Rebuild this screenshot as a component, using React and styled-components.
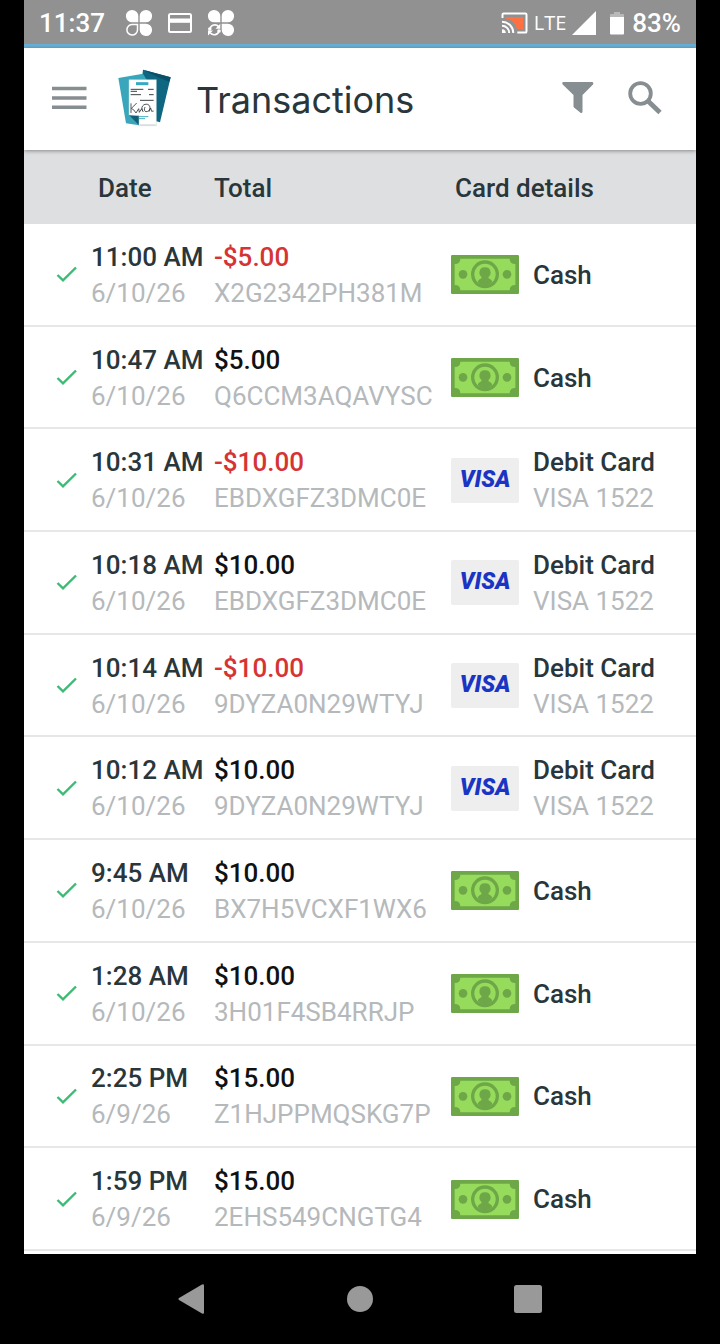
import React from 'react';
import styled, {createGlobalStyle} from 'styled-components';

const GlobalStyle = createGlobalStyle`
  * {
    box-sizing: border-box;
  }

  body {
    margin: 0;
    background: #000;
    font-family: Roboto, "Liberation Sans", sans-serif;
    font-size: 26px;
    line-height: 36px;
    color: #29363b;
  }

  button {
    display: flex;
    align-items: center;
    justify-content: center;
    padding: 0;
    border: none;
    background: none;
    cursor: pointer;
  }

  svg {
    display: block;
    flex: none;
  }
`;

const Device = styled.div`
  display: flex;
  flex-direction: column;
  min-height: 100vh;
  padding: 0 24px;
`;

const StatusBar = styled.div`
  display: flex;
  align-items: center;
  justify-content: space-between;
  height: 48px;
  padding: 0 15px;
  border-bottom: 4px solid #68b0d5;
  background: #919191;
  color: #fff;
  font-weight: 500;
`;

const StatusGroup = styled.div`
  display: flex;
  align-items: center;
  gap: ${(props) => props.$gap};
  padding-top: 2px;
`;

const Clock = styled.span`
  margin-right: 6px;
`;

const Network = styled.span`
  font-family: "Open Sans", sans-serif;
  font-size: 20px;
  font-weight: 400;
`;

const Battery = styled.span`
  display: flex;
  align-items: center;
  gap: 8px;
  margin-left: 8px;
`;

const AppBar = styled.header`
  position: relative;
  display: flex;
  align-items: center;
  height: 102px;
  padding: 0 34px 2px 28px;
  background: #fff;
  box-shadow: 0 1px 4px rgba(0, 0, 0, 0.4);
`;

const MenuButton = styled.button`
  margin-right: 30px;
`;

const Title = styled.h1`
  flex: 1;
  margin: 0 0 0 24px;
  padding-top: 4px;
  font-family: Inter, sans-serif;
  font-size: 36px;
  font-weight: 400;
  line-height: 44px;
`;

const Actions = styled.div`
  display: flex;
  align-items: center;
  gap: 34px;
`;

const List = styled.main`
  display: flex;
  flex: 1;
  flex-direction: column;
  padding-bottom: 3px;
  background: #fff;
`;

const TransactionsTable = styled.table`
  flex: 1;
  width: 100%;
  table-layout: fixed;
  border-collapse: separate;
  border-spacing: 0;
`;

const HeadCell = styled.th`
  height: 74px;
  width: ${(props) => props.$width || 'auto'};
  padding: 2px 0 0 ${(props) => props.$indent || '0'};
  background: #dedfe1;
  font-weight: 500;
  text-align: left;
`;

const Cell = styled.td`
  padding: 1px 0 0 ${(props) => props.$indent || '0'};
  border-bottom: 2px solid #e6e7e8;
  vertical-align: middle;
  white-space: nowrap;
`;

const Primary = styled.div`
  color: ${(props) => props.$color || 'inherit'};
  font-weight: 500;
`;

const Secondary = styled.div`
  color: #b5b9bb;
`;

const CardDetails = styled.div`
  display: flex;
  align-items: center;
  gap: 14px;
`;

const VisaBadge = styled.div`
  width: 68px;
  height: 45px;
  border-radius: 2px;
  background: #eeeeee;
  color: #1a35c4;
  font-size: 23px;
  font-style: italic;
  font-weight: 900;
  line-height: 44px;
  text-align: center;
`;

const NavBar = styled.nav`
  display: grid;
  grid-template-columns: repeat(3, 1fr);
  align-items: center;
  height: 90px;
  padding: 0 84px;
`;

const CloverIcon = ({syncing}) => (
    <svg width="28" height="28" viewBox="0 0 28 28" fill="#fff">
        <path d="M13.3 13.3H7.5A6.2 6.2 0 1 1 13.3 7.2z"/>
        <path d="M14.7 13.3V7.2a6.2 6.2 0 1 1 5.8 6.1z"/>
        <path d="M14.7 14.7h5.8a6.2 6.2 0 1 1-5.8 6.1z"/>
        {syncing ? (
            <g>
                <path d="M3 19.6a5 5 0 0 1 8.6-2M12 22a5 5 0 0 1-8.6 2" fill="none" stroke="#fff" strokeWidth="1.7"/>
                <path d="M13.3 14.7v5H8.4zM1 26.5v-5h5z"/>
                <circle cx="2.8" cy="20" r="1.8"/>
                <circle cx="12" cy="22" r="1.8"/>
            </g>
        ) : (
            <path d="M12.5 15.5H7.7a5.3 5.3 0 1 0 4.8 5.4z" fill="none" stroke="#fff" strokeWidth="1.5"/>
        )}
    </svg>
);

const CreditCardIcon = () => (
    <svg width="26" height="22" viewBox="0 0 26 22">
        <rect x="2" y="2" width="22" height="18" rx="1.5" fill="none" stroke="#fff" strokeWidth="2"/>
        <path d="M2 6.5h22v4.3H2z" fill="#fff"/>
    </svg>
);

const CastIcon = () => (
    <svg width="27" height="22" viewBox="0 0 27 22" fill="none" stroke="#fff" strokeWidth="2">
        <path d="M5 5h17v12h-6A12 12 0 0 0 5 7z" fill="#ff7043" stroke="none"/>
        <path d="M1.5 6V2.6q0-1.2 1.2-1.2h21.6q1.2 0 1.2 1.2v16.8q0 1.2-1.2 1.2h-8"/>
        <path d="M1 9.7a11.3 11.3 0 0 1 11.3 11.3M1 13.8A7.2 7.2 0 0 1 8.2 21"/>
        <path d="M1 17.2A3.8 3.8 0 0 1 4.8 21H1z" fill="#fff" stroke="none"/>
    </svg>
);

const SignalIcon = () => (
    <svg width="24" height="24" viewBox="0 0 24 24">
        <path d="M24 0v24H0z" fill="#fff"/>
    </svg>
);

const BatteryIcon = () => (
    <svg width="14" height="24" viewBox="0 0 14 24">
        <path d="M4 1h6v2h3q1 0 1 1v3H0V4q0-1 1-1h3z" fill="#b9b9b9"/>
        <path d="M0 6h14v16.5q0 1-1 1H1q-1 0-1-1z" fill="#fff"/>
    </svg>
);

const MenuIcon = () => (
    <svg width="35" height="24" viewBox="0 0 35 24" stroke="#868e91" strokeWidth="3.5">
        <path d="M0 2.500h34.500M0 12h34.500M0 21.300h34.500"/>
    </svg>
);

const PapersLogo = () => (
    <svg width="55" height="58" viewBox="279 60 165 174">
        <path d="M357 62 440 85 408 220 340 200z" fill="#0e6680"/>
        <path d="M357 62 440 85 436 98 400 84z" fill="#0a5068"/>
        <path d="M283 87 357 74 368 92 370 210 345 229 306 223z" fill="#3aa6bb"/>
        <path d="M315 198 345 229 348 198z" fill="#0f5f77"/>
        <path d="M315 92h82v138h-52v-30l-30-2z" fill="#fff" stroke="#c3d3d8" strokeWidth="1.5"/>
        <path d="M336 104h37" stroke="#35a9c0" strokeWidth="9"/>
        <path d="M320 121h38M320 127h19M320 137h31M372 121h17M375 137h14M348 154h41" stroke="#3d4346" strokeWidth="3"/>
        <path d="M321 163v29M338 162q-9 10-16 16 8 3 14 14l8-13 2 11 7-11q2 8 5 8" fill="none" stroke="#34393c" strokeWidth="2.500"/>
        <path d="M357 188q-8-14 3-21 14-5 18 7 0 14-12 14-8-2-3-14M375 188l5-11 3 10 6-1" fill="none" stroke="#34393c" strokeWidth="2.500"/>
        <path d="M345 203h28M345 209h18" stroke="#45adc1" strokeWidth="3"/>
        <path d="M348 228h47" stroke="#d5d8d6" strokeWidth="4"/>
    </svg>
);

const FilterIcon = () => (
    <svg width="32" height="32" viewBox="0 0 32 32">
        <path d="M1 0h29.500q1.500 1 .5 2.500L20.500 13v17q-.5 1.500-2 .7L12 25.500q-.5-.5-.5-1.500V13L.7 2.500Q-.3 1 1 0z" fill="#868e91"/>
    </svg>
);

const SearchIcon = () => (
    <svg width="34" height="34" viewBox="0 0 34 34" fill="none" stroke="#868e91">
        <circle cx="12.500" cy="12.500" r="10.300" strokeWidth="3.800"/>
        <path d="m20.500 20.500 11.500 11" strokeWidth="4.800"/>
    </svg>
);

const CheckIcon = () => (
    <svg width="21" height="17" viewBox="0 0 21 17">
        <path d="m1.500 9 5.500 5.400L20 1.500" fill="none" stroke="#3dbb74" strokeWidth="2.400"/>
    </svg>
);

const CashIcon = () => (
    <svg width="68" height="39" viewBox="0 0 204 117">
        <rect width="204" height="117" rx="4" fill="#6ea748"/>
        <path d="M28 11h148q0 16 17 16v63q-17 0-17 16H28q0-16-17-16V27q17 0 17-16z" fill="#97db5d"/>
        <g fill="#6ea748">
            <circle cx="36" cy="58" r="13"/>
            <circle cx="168" cy="58" r="13"/>
            <circle cx="102" cy="58" r="42"/>
        </g>
        <circle cx="102" cy="58" r="32" fill="#97db5d"/>
        <path d="M102 37q16 0 17 16 0 9-7 14 0 4 8 7 5 3 3 8-9 10-21 10T81 82q-2-5 3-8 8-3 8-7-7-5-7-14 1-16 17-16z" fill="#6ea748"/>
    </svg>
);

const transactions = [
    {time: '11:00 AM', date: '6/10/26', total: '-$5.00', reference: 'X2G2342PH381M'},
    {time: '10:47 AM', date: '6/10/26', total: '$5.00', reference: 'Q6CCM3AQAVYSC'},
    {time: '10:31 AM', date: '6/10/26', total: '-$10.00', reference: 'EBDXGFZ3DMC0E', card: 'VISA 1522'},
    {time: '10:18 AM', date: '6/10/26', total: '$10.00', reference: 'EBDXGFZ3DMC0E', card: 'VISA 1522'},
    {time: '10:14 AM', date: '6/10/26', total: '-$10.00', reference: '9DYZA0N29WTYJ', card: 'VISA 1522'},
    {time: '10:12 AM', date: '6/10/26', total: '$10.00', reference: '9DYZA0N29WTYJ', card: 'VISA 1522'},
    {time: '9:45 AM', date: '6/10/26', total: '$10.00', reference: 'BX7H5VCXF1WX6'},
    {time: '1:28 AM', date: '6/10/26', total: '$10.00', reference: '3H01F4SB4RRJP'},
    {time: '2:25 PM', date: '6/9/26', total: '$15.00', reference: 'Z1HJPPMQSKG7P'},
    {time: '1:59 PM', date: '6/9/26', total: '$15.00', reference: '2EHS549CNGTG4'},
];

const TransactionRow = ({transaction}) => {
    const {time, date, total, reference, card} = transaction;
    const isRefund = total.startsWith('-');

    return (
        <tr>
            <Cell $indent="32px"><CheckIcon/></Cell>
            <Cell>
                <Primary>{time}</Primary>
                <Secondary>{date}</Secondary>
            </Cell>
            <Cell>
                <Primary $color={isRefund ? '#d63434' : '#111'}>{total}</Primary>
                <Secondary>{reference}</Secondary>
            </Cell>
            <Cell>
                <CardDetails>
                    {card ? <VisaBadge>VISA</VisaBadge> : <CashIcon/>}
                    <div>
                        <Primary>{card ? 'Debit Card' : 'Cash'}</Primary>
                        {card && <Secondary>{card}</Secondary>}
                    </div>
                </CardDetails>
            </Cell>
        </tr>
    );
};

const App = () => {
    return (
        <>
            <GlobalStyle/>
            <Device>
                <StatusBar>
                    <StatusGroup $gap="14px">
                        <Clock>11:37</Clock>
                        <CloverIcon/>
                        <CreditCardIcon/>
                        <CloverIcon syncing/>
                    </StatusGroup>
                    <StatusGroup $gap="6px">
                        <CastIcon/>
                        <Network>LTE</Network>
                        <SignalIcon/>
                        <Battery>
                            <BatteryIcon/>
                            <span>83%</span>
                        </Battery>
                    </StatusGroup>
                </StatusBar>
                <AppBar>
                    <MenuButton aria-label="Menu"><MenuIcon/></MenuButton>
                    <PapersLogo/>
                    <Title>Transactions</Title>
                    <Actions>
                        <button aria-label="Filter"><FilterIcon/></button>
                        <button aria-label="Search"><SearchIcon/></button>
                    </Actions>
                </AppBar>
                <List>
                    <TransactionsTable>
                        <thead>
                        <tr>
                            <HeadCell $width="67px" aria-label="Status"/>
                            <HeadCell $width="123px" $indent="7px">Date</HeadCell>
                            <HeadCell $width="237px">Total</HeadCell>
                            <HeadCell $indent="4px">Card details</HeadCell>
                        </tr>
                        </thead>
                        <tbody>
                        {transactions.map(transaction => (
                            <TransactionRow key={transaction.time} transaction={transaction}/>
                        ))}
                        </tbody>
                    </TransactionsTable>
                </List>
                <NavBar>
                    <button aria-label="Back">
                        <svg width="30" height="32" viewBox="0 0 30 32">
                            <path d="M25 1.500q2-1 2 1v27q0 2-2 1L2 17q-1.500-1 0-2z" fill="#999"/>
                        </svg>
                    </button>
                    <button aria-label="Home">
                        <svg width="26" height="26" viewBox="0 0 26 26">
                            <circle cx="13" cy="13" r="13" fill="#999"/>
                        </svg>
                    </button>
                    <button aria-label="Recent apps">
                        <svg width="28" height="28" viewBox="0 0 28 28">
                            <rect width="28" height="28" rx="2.500" fill="#999"/>
                        </svg>
                    </button>
                </NavBar>
            </Device>
        </>
    );
};

export default App;
